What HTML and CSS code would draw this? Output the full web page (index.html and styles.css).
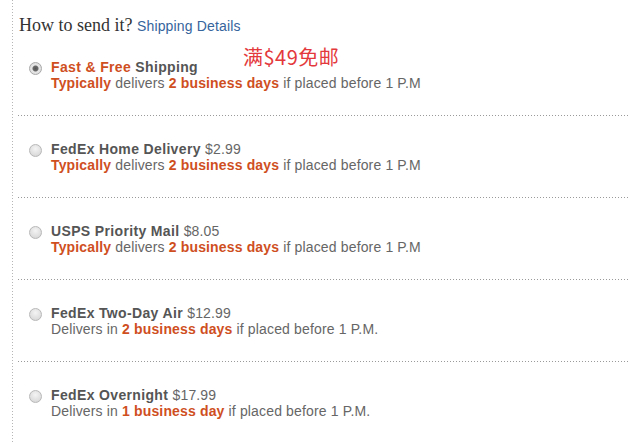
FILE: index.html
```html
<!DOCTYPE html>
<html lang="en">
<head>
  <meta charset="UTF-8" />
  <title>How to send it?</title>
  <link rel="stylesheet" href="styles.css">
</head>
<body>

  <div class="ship-box">
    <h3 class="ship-title">How to send it? <a href="#" class="ship-link">Shipping Details</a></h3>

    <ul class="ship-list">
      <li class="ship-row">
        <span class="radio checked"></span>
        <div class="ship-info">
          <div class="ship-name"><span class="hl">Fast &amp; Free</span> Shipping</div>
          <div class="ship-desc"><b class="hl">Typically</b> delivers <b class="hl">2 business days</b> if placed before 1 P.M</div>
        </div>
        <span class="promo">满$49免邮</span>
      </li>
      <li class="ship-row">
        <span class="radio"></span>
        <div class="ship-info">
          <div class="ship-name">FedEx Home Delivery <span class="price">$2.99</span></div>
          <div class="ship-desc"><b class="hl">Typically</b> delivers <b class="hl">2 business days</b> if placed before 1 P.M</div>
        </div>
      </li>
      <li class="ship-row">
        <span class="radio"></span>
        <div class="ship-info">
          <div class="ship-name">USPS Priority Mail <span class="price">$8.05</span></div>
          <div class="ship-desc"><b class="hl">Typically</b> delivers <b class="hl">2 business days</b> if placed before 1 P.M</div>
        </div>
      </li>
      <li class="ship-row">
        <span class="radio"></span>
        <div class="ship-info">
          <div class="ship-name">FedEx Two-Day Air <span class="price">$12.99</span></div>
          <div class="ship-desc">Delivers in <b class="hl">2 business days</b> if placed before 1 P.M.</div>
        </div>
      </li>
      <li class="ship-row">
        <span class="radio"></span>
        <div class="ship-info">
          <div class="ship-name">FedEx Overnight <span class="price">$17.99</span></div>
          <div class="ship-desc">Delivers in <b class="hl">1 business day</b> if placed before 1 P.M.</div>
        </div>
      </li>
    </ul>
  </div>

</body>
</html>
```

FILE: styles.css
```css
* {
  box-sizing: border-box;
}

html, body {
  margin: 0;
  padding: 0;
  background: #fff;
  overflow: hidden;
}

/* caixa com linha pontilhada à esquerda */
.ship-box {
  margin-left: 12px;
  min-height: 443px;
  background: repeating-linear-gradient(to bottom, #b5b5b5 0, #b5b5b5 1px, transparent 1px, transparent 3px) left top / 1px 100% no-repeat;
  padding-top: 15px;
}

.ship-title {
  margin: 0;
  padding-left: 7px;
  height: 19px;
  line-height: 20px;
  font-family: "Liberation Serif", serif;
  font-weight: normal;
  font-size: 18px;
  color: #333;
}

.ship-link {
  font-family: "Liberation Sans", Arial, sans-serif;
  font-size: 14px;
  letter-spacing: 0.15px;
  color: #36649c;
  text-decoration: none;
}

.ship-list {
  list-style: none;
  margin: 0 0 0 6px;
  padding: 0;
}

.ship-row {
  position: relative;
  display: flex;
  align-items: flex-start;
  padding: 25px 0 24px;
  border-bottom: 1px solid transparent;
  border-image: repeating-linear-gradient(to right, #9a9a9a 0, #9a9a9a 1px, transparent 1px, transparent 3px) 1;
  border-image-slice: 0 0 1 0;
  font-family: "Liberation Sans", Arial, sans-serif;
  font-size: 14px;
  line-height: 16px;
  letter-spacing: 0.15px;
  color: #666;
}

.radio {
  width: 13px;
  height: 13px;
  margin: 3px 0 0 11px;
  border-radius: 50%;
  border: 1px solid #b8b8b8;
  background: radial-gradient(circle at 50% 35%, #f4f4f4 0, #dcdcdc 70%, #cfcfcf 100%);
  flex: none;
}

.radio.checked {
  background: radial-gradient(circle, #555 0, #6a6a6a 2.5px, #e6e6e6 3.5px, #d8d8d8 100%);
  border-color: #a8a8a8;
}

.ship-info {
  margin-left: 9px;
}

.ship-name {
  font-weight: bold;
  letter-spacing: 0.35px;
  color: #555;
}

.price {
  font-weight: normal;
  letter-spacing: 0.15px;
  color: #666;
}

.hl {
  color: #cf4f1f;
  font-weight: bold;
}

.promo {
  position: absolute;
  left: 225px;
  top: 11px;
  font-family: "Noto Sans CJK SC", "Liberation Sans", sans-serif;
  font-size: 20px;
  line-height: 24px;
  letter-spacing: 0.5px;
  color: #e4393c;
}
```
